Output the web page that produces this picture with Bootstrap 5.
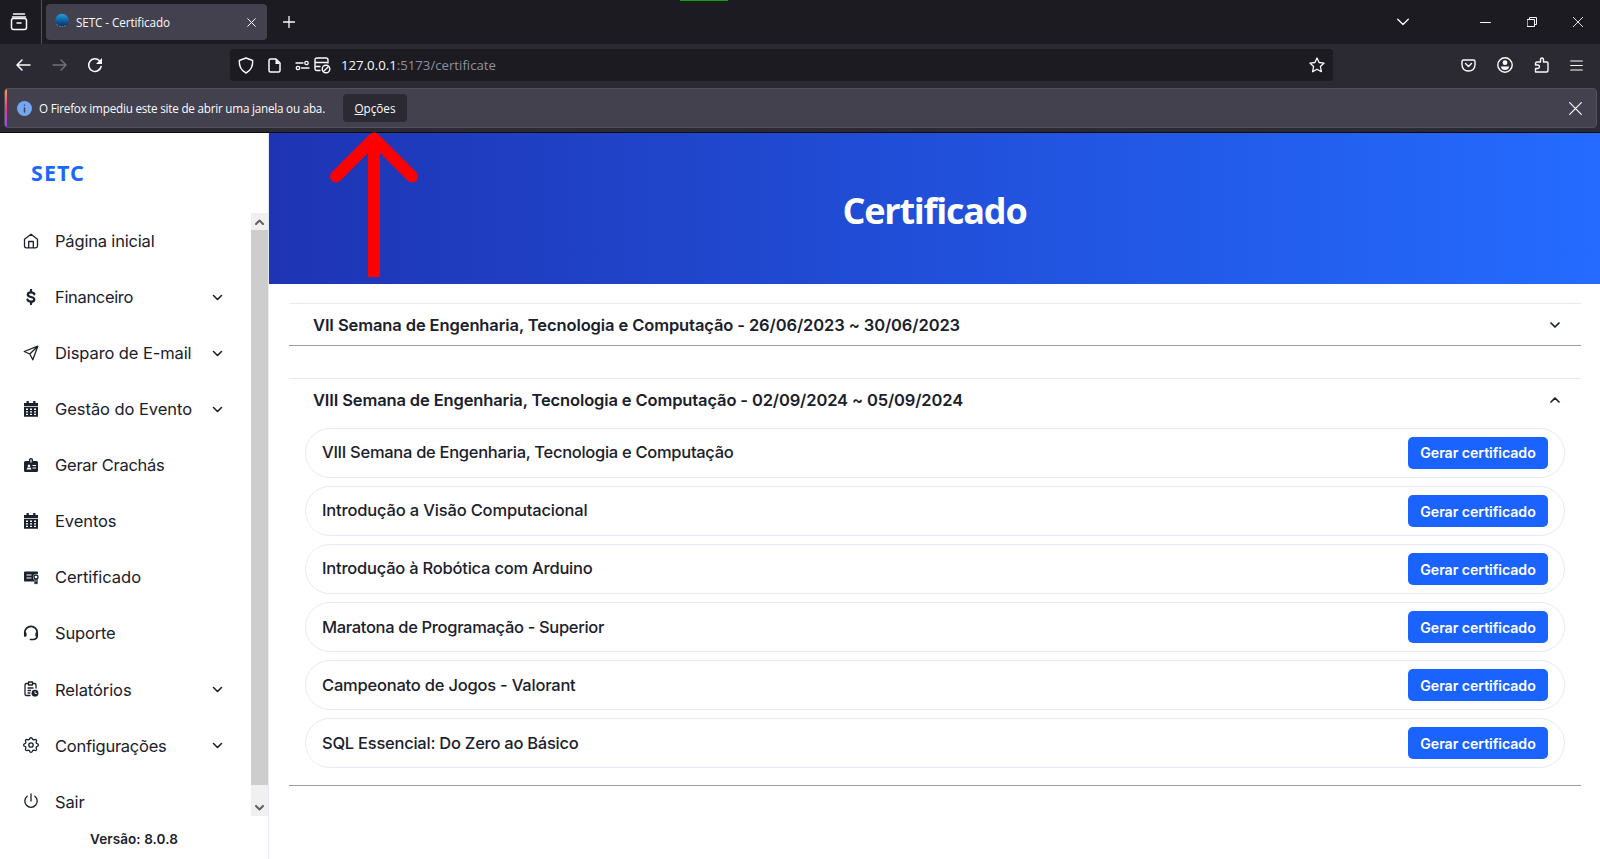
<!DOCTYPE html>
<html lang="pt-BR">
<head>
<meta charset="utf-8">
<title>SETC - Certificado</title>
<link href="https://cdn.jsdelivr.net/npm/bootstrap@5.3.0/dist/css/bootstrap.min.css" rel="stylesheet">
<style>
body{width:1600px;height:859px;overflow:hidden;background:#fff;color:#1a202c;font-family:Inter,"Liberation Sans",sans-serif}
svg{display:block;flex:none;fill:none;stroke:currentColor;stroke-linecap:round;stroke-linejoin:round}
.solid{fill:currentColor;stroke:none}
.browser{font-family:"Open Sans","Noto Sans",sans-serif;color:#fbfbfe;font-size:11.7px;background:#2b2a33;height:133px;border-bottom:1px solid #0c0c0d}
.t{display:inline-block;white-space:nowrap}
.strip{height:44px;background:#1c1b22}
.strip-edge{width:42px;border-right:1px solid #52525e;padding-left:10px}
.tab-box{width:221px;height:36px;margin-left:4px;background:#42414d;border-radius:4px;padding:0 11px 0 9px}
.tab-box .t,.note .t{padding-top:2px}
.loader{left:680px;top:0;width:48px;height:1px;background:#12a012}
.tools{height:44px;padding:3px 0 5px}
.urlbar{width:1103px;height:32px;background:#1c1b22;border-radius:4px;font-size:13.2px}
.dim{color:#8f8f9d}
.note{height:40px;margin:0 3px 0 4px;background:#42414d;border:1px solid #52525e;border-radius:4px;overflow:hidden}
.note-edge{width:2px;background:linear-gradient(#ff9f3e,#f0389a 50%,#8a4dff)}
.opt{width:64px;height:28px;background:#2b2a33;border-radius:4px;margin-left:18px}
.side{width:269px;border-right:1px solid #e6eaf2;height:726px}
.brand{height:80px;padding:26px 0 0 31px;font:700 21.5px/27px "Noto Sans","Open Sans",sans-serif;color:#1a66ff}
.menu{height:603px;overflow:hidden}
.item{height:56.05px;padding-left:23px;font-size:16.5px;width:251px}
.item .lbl{width:163px;margin-left:16px;padding-top:1px}
.sbar{width:17px;background:#cdcdcd;color:#606060}
.sbar div{height:17px;background:#f0f0f0}
.sbar .low{height:31px}
.ver{font-size:13.5px;font-weight:600;padding:13px 0 0 90px;line-height:20px}
.hero{height:150.5px;background:linear-gradient(90deg,#1e34b4,#246bff);color:#fff;font:700 36px/1 "Open Sans",sans-serif}
.acc{margin:0 19px 0 20px;border-top:1px solid #e6ebf1;border-bottom:1.5px solid #989ca5}
.acc-h{height:41px;padding:0 21px 0 24px;font-weight:600;font-size:16.5px}
.pill{height:50px;border:1px solid #e6ebf3;border-radius:25px;margin:0 16px 8.1px;padding:0 16px 0 16px;font-weight:500;font-size:16.5px}
.gen{width:140px;height:32px;padding:1px 0 0;border:0;border-radius:5px;background:#1a63ff;color:#fff;font-weight:600;font-size:14.2px}
.pointer{left:325px;top:131px}
</style>
</head>
<body class="position-relative">
<header class="browser">
 <div class="strip d-flex align-items-center position-relative">
  <div class="strip-edge h-100 d-flex align-items-center"><svg width="18" height="18" viewBox="0 0 18 18" stroke-width="1.5"><path d="M3.5 1h11M2.5 4h13"/><rect x="1.5" y="5.5" width="15" height="11" rx="2"/><path d="M7 10h4"/></svg></div>
  <div class="tab-box d-flex align-items-center"><svg class="mb-1" width="14" height="15" viewBox="0 0 15 15"><defs><linearGradient id="g" x2="0" y2="1"><stop stop-color="#2aa0dd"/><stop offset=".55" stop-color="#0b5c9e"/><stop offset="1" stop-color="#122650"/></linearGradient></defs><circle class="solid" cx="7.5" cy="7.5" r="7.2" style="fill:url(#g)"/><path d="M2 12q5 4 11 0" stroke="#8a9bb8" stroke-dasharray="1 2"/></svg><span class="t" id="t1" style="margin-left:7px">SETC - Certificado</span><svg class="ms-auto" width="9" height="9" viewBox="0 0 9 9"><path d="M.7.7l7.6 7.6M8.3.7L.7 8.3"/></svg></div>
  <svg style="margin-left:16px" width="12" height="12" viewBox="0 0 12 12" stroke-width="1.3"><path d="M6 .5v11M.5 6h11"/></svg>
  <div class="loader position-absolute"></div>
  <div class="ms-auto d-flex align-items-center" style="padding-right:17px"><svg width="12" height="8" viewBox="0 0 12 8" stroke-width="1.3"><path d="M.7 1.2L6 6.5l5.3-5.3"/></svg><svg style="margin-left:71px" width="11" height="11" viewBox="0 0 11 11"><path d="M.5 5.5h10"/></svg><svg style="margin-left:36px" width="10" height="10" viewBox="0 0 10 10"><path d="M.5 2.5h7v7h-7zM2.5 2V.5h7v7H8"/></svg><svg style="margin-left:36px" width="10" height="10" viewBox="0 0 10 10" stroke-width=".9"><path d="M.3.3l9.4 9.4M9.7.3L.3 9.7"/></svg></div>
 </div>
 <div class="tools d-flex align-items-center">
  <svg style="margin-left:16px" width="15" height="12" viewBox="0 0 15 12" stroke-width="1.5"><path d="M6 1L1 6l5 5M1 6h13"/></svg>
  <svg style="margin-left:21px;color:#73727c" width="15" height="12" viewBox="0 0 15 12" stroke-width="1.4"><path d="M9 1l5 5-5 5M14 6H1"/></svg>
  <svg style="margin-left:20px" width="16" height="16" viewBox="0 0 16 16" stroke-width="1.5"><path d="M14.100 9.500A6.300 6.300 0 1 1 12.500 3.700"/><path class="solid" d="M15 1v6H9z"/></svg>
  <div class="urlbar d-flex align-items-center" style="margin-left:127px;padding:0 8px">
   <svg width="16" height="17" viewBox="0 0 16 17" stroke-width="1.4"><path d="M8 1L14.7 3.5C15 10 12 14 8 16 4 14 1 10 1.3 3.5z"/></svg>
   <svg style="margin-left:14px" width="13" height="15" viewBox="0 0 13 15" stroke-width="1.5"><path d="M1 2.500Q1 1 2.500 1H8l4 4v7.500Q12 14 10.500 14h-8Q1 14 1 12.500z"/><path class="solid" d="M7.500 1v5H12z"/></svg>
   <svg style="margin-left:14px" width="15" height="11" viewBox="0 0 15 11" stroke-width="1.3"><path d="M1 3h7M6.500 8H14"/><circle cx="11.500" cy="3" r="1.700"/><circle cx="3" cy="8" r="1.700"/></svg>
   <svg style="margin-left:4px" width="17" height="17" viewBox="0 0 17 17" stroke-width="1.4"><path d="M6 13.500H3Q1 13.500 1 11.500V3Q1 1 3 1h9Q14 1 14 3v3M1 5.500h13M1 9.500h5"/><circle cx="12" cy="12" r="3.800"/><path d="M9.500 14.500l5-5"/></svg>
   <span class="t" id="t2" style="margin-left:10px;padding-top:1px">127.0.0.1<span class="dim">:5173/certificate</span></span>
   <svg class="ms-auto" width="16" height="16" viewBox="0 0 16 16" stroke-width="1.3"><path d="M8 1l2.100 4.500 5 .6-3.700 3.400 1 5.200L8 12.200l-4.400 2.500 1-5.200L.9 6.100l5-.6z"/></svg>
  </div>
  <div class="ms-auto d-flex align-items-center" style="padding-right:17px;gap:21px">
   <svg width="15" height="13" viewBox="0 0 15 13" stroke-width="1.4"><path d="M2.500 1h10Q14 1 14 2.500V6Q13.500 12 7.500 12T1 6V2.500Q1 1 2.500 1zM4.500 4.500l3 3 3-3"/></svg>
   <svg width="16" height="16" viewBox="0 0 16 16" stroke-width="1.4"><circle cx="8" cy="8" r="7.200"/><circle class="solid" cx="8" cy="5.700" r="2.400"/><path class="solid" d="M3.800 9.500h8.400Q11.500 13 8 13T3.800 9.500z"/></svg>
   <svg width="15" height="16" viewBox="0 0 15 16" stroke-width="1.4"><path d="M1.500 15h11Q14 15 14 13.500V6Q14 5 13 5H9.500V3Q9.500 1 8 1T6.500 3v2H3Q1.500 5 1.500 6.500V8H4q1.500.3 1.500 1.700T4 11.500H1.500z"/></svg>
   <svg width="13" height="11" viewBox="0 0 13 11" stroke-width="1.2"><path d="M.7 1h11.600M.7 5.500h11.600M.7 10h11.600"/></svg>
  </div>
 </div>
 <div class="note d-flex align-items-center"><div class="note-edge align-self-stretch"></div>
  <svg style="margin-left:10px" width="15" height="15" viewBox="0 0 15 15"><circle class="solid" cx="7.500" cy="7.500" r="7.500" style="fill:#73a7f3"/><path d="M7.500 7v4M7.500 4.200v.1" stroke="#42414d" stroke-width="1.500"/></svg>
  <span class="t" id="t3" style="margin-left:7px">O Firefox impediu este site de abrir uma janela ou aba.</span>
  <div class="opt d-flex align-items-center justify-content-center"><span class="t" id="t4"><u>O</u>pções</span></div>
  <svg class="ms-auto" style="margin-right:14px" width="13" height="13" viewBox="0 0 13 13" stroke-width="1.200"><path d="M.7.7l11.600 11.600M12.300.7L.7 12.300"/></svg>
 </div>
</header>
<div class="d-flex">
 <aside class="side flex-shrink-0">
  <div class="brand"><span class="t" id="t5">SETC</span></div>
  <div class="d-flex menu">
   <nav id="menu"></nav>
   <div class="sbar d-flex flex-column justify-content-between"><div class="d-flex align-items-center justify-content-center"><svg width="9" height="6" viewBox="0 0 9 6" stroke-width="2"><path d="M1 5l3.500-3.500L8 5"/></svg></div><div class="low d-flex justify-content-center pt-3"><svg style="margin-top:4px" width="9" height="6" viewBox="0 0 9 6" stroke-width="2"><path d="M1 1l3.500 3.500L8 1"/></svg></div></div>
  </div>
  <div class="ver"><span class="t" id="t6">Versão: 8.0.8</span></div>
 </aside>
 <main class="flex-grow-1">
  <div class="hero d-flex align-items-center justify-content-center"><span class="t" id="t7" style="margin-top:5px">Certificado</span></div>
  <section class="acc" style="margin-top:19.600px"><div class="acc-h d-flex align-items-center justify-content-between"><span class="t" id="t8" style="padding-top:1px">VII Semana de Engenharia, Tecnologia e Computação - 26/06/2023 ~ 30/06/2023</span><svg width="10" height="6" viewBox="0 0 10 6" stroke-width="1.700"><path d="M1 1l4 4 4-4"/></svg></div></section>
  <section class="acc" style="margin-top:32px;height:407.500px"><div class="acc-h d-flex align-items-center justify-content-between" style="margin-bottom:7.500px"><span class="t" id="t9" style="padding-top:1px">VIII Semana de Engenharia, Tecnologia e Computação - 02/09/2024 ~ 05/09/2024</span><svg width="10" height="6" viewBox="0 0 10 6" stroke-width="1.700"><path d="M1 5l4-4 4 4"/></svg></div><div id="list"></div></section>
 </main>
</div>
<svg class="pointer position-absolute" width="96" height="146" viewBox="0 0 96 146" stroke-width="12"><path stroke="red" d="M11 45.500L49 7.500l38 38"/><path stroke="red" stroke-linecap="butt" d="M49 8v138"/></svg>
<script src="https://cdn.jsdelivr.net/npm/bootstrap@5.3.0/dist/js/bootstrap.bundle.min.js"></script>
<script>
const cal='<path class="solid" fill-rule="evenodd" d="M3.500 0h2.300v2h4.400V0h2.300v2H15v3H1V2h2.500zM1 5.700h14V15.700H1zM3 7.600v1.500h2V7.600zm4 0v1.500h2V7.600zm4 0v1.500h2V7.600zm-8 2.600v1.400h2v-1.400zm4 0v1.400h2v-1.400zm4 0v1.400h2v-1.400zm-8 2.500v1.400h2v-1.400zm4 0v1.400h2v-1.400zm4 0v1.400h2v-1.400z"/>';
let gear='';
for(let i=0;i<64;i++){const a=i/64*2*Math.PI,r=6.500+.8*Math.tanh(2.500*Math.cos(8*a));gear+=(i?'L':'M')+(8+r*Math.cos(a)).toFixed(2)+' '+(8+r*Math.sin(a)).toFixed(2)}
// label, icon, expandable, label width
const items=[
['Página inicial','<path d="M1.500 6.200L8 1.200l6.500 5V13Q14.500 14.800 12.700 14.800H3.300Q1.500 14.800 1.500 13zM5.700 14.500V8.500h4.600v6"/>',0,99.5],
['Financeiro','<path stroke-width="2.300" d="M11.300 5.200Q10.700 3.300 8 3.300q-3.200 0-3.200 2.200Q4.800 7.300 8 8t3.300 2.500q0 2.200-3.300 2.200-2.800 0-3.500-2M8 1v2M8 13v2"/>',1,78],
['Disparo de E-mail','<path d="M1.200 6.500L14.800 1.200l-5 13.600-3-5.800zM6.800 9l8-7.800"/>',1,136.5],
['Gestão do Evento',cal,1,137],
['Gerar Crachás','<path class="solid" fill-rule="evenodd" d="M6 4V2.500Q6 1 8 1t2 1.500V4h3.500Q15 4 15 5.500v8Q15 15 13.500 15h-11Q1 15 1 13.500v-8Q1 4 2.500 4zM7.400 2.500v3h1.200v-3zM6 7.500a1.300 1.300 0 1 0 .01 0zM3.500 12.500h5L7.500 10.500h-3zM9.500 8v1H13V8zm0 2.500v1H13v-1z"/>',0,109.5],
['Eventos',cal,0,61.5],
['Certificado','<path class="solid" fill-rule="evenodd" d="M2 2.500h12q1 0 1 1V5Q10.500 4 10 8q0 2 1 3v1.500H2q-1 0-1-1v-8q0-1 1-1zM3.500 5.500v1h5v-1zm0 3v1h5v-1z"/><circle cx="13" cy="8" r="2"/><path d="M12 10.500v4l1-1 1 1v-4"/>',0,86],
['Suporte','<path stroke-width="1.700" d="M1.800 10.500V7.500a6.200 6.200 0 0 1 12.400 0v3q0 3.500-3.500 4H7.500"/><path stroke-width="2.600" d="M2.300 8.500v2M13.700 8.500v2"/>',0,60.5],
['Relatórios','<path d="M7 14.500H3.500Q2 14.500 2 13V4q0-1.500 1.500-1.500H5M10 2.500h1.500Q13 2.500 13 4v3M5.500 1h4v3h-4zM5 7h5M5 9.500h2.500M5 12h2"/><circle class="solid" cx="12" cy="12.200" r="3.400"/><path stroke="#fff" stroke-width=".9" d="M12 10.500v2h1.500"/>',1,76.5],
['Configurações','<path d="'+gear+'z"/><circle cx="8" cy="8" r="2.200"/>',1,111.5],
['Sair','<path d="M8 1v7M4.200 3.200a6.200 6.200 0 1 0 7.600 0"/>',0,29.5]];
menu.innerHTML=items.map(([n,p,c,w])=>`<div class="item d-flex align-items-center"><svg width="16" height="16" viewBox="0 0 16 16" stroke-width="1.300">${p}</svg><span class="lbl"><span class="t" data-w="${w}">${n}</span></span>${c?'<svg style="margin-left:-6px" width="11" height="7" viewBox="0 0 11 7" stroke-width="1.600"><path d="M1.500 1.500l4 4 4-4"/></svg>':''}</div>`).join('');
list.innerHTML=[['VIII Semana de Engenharia, Tecnologia e Computação',411.5],['Introdução a Visão Computacional',265.5],['Introdução à Robótica com Arduino',270.5],['Maratona de Programação - Superior',282],['Campeonato de Jogos - Valorant',253.5],['SQL Essencial: Do Zero ao Básico',256.5]].map(([n,w])=>`<div class="pill d-flex align-items-center justify-content-between"><span class="t" data-w="${w}">${n}</span><button class="gen btn"><span class="t" data-w="115.5">Gerar certificado</span></button></div>`).join('');
// spread each label to its intended width by letter spacing
const W={t1:94,t2:155,t3:286,t4:41,t5:54,t6:88,t7:184,t8:647,t9:650};
document.querySelectorAll('.t').forEach(e=>{const w=W[e.id]||+e.dataset.w;if(!w)return;e.style.letterSpacing='0px';const d=w-e.getBoundingClientRect().width;e.style.letterSpacing=(d/e.textContent.length)+'px'});
</script>
</body>
</html>
